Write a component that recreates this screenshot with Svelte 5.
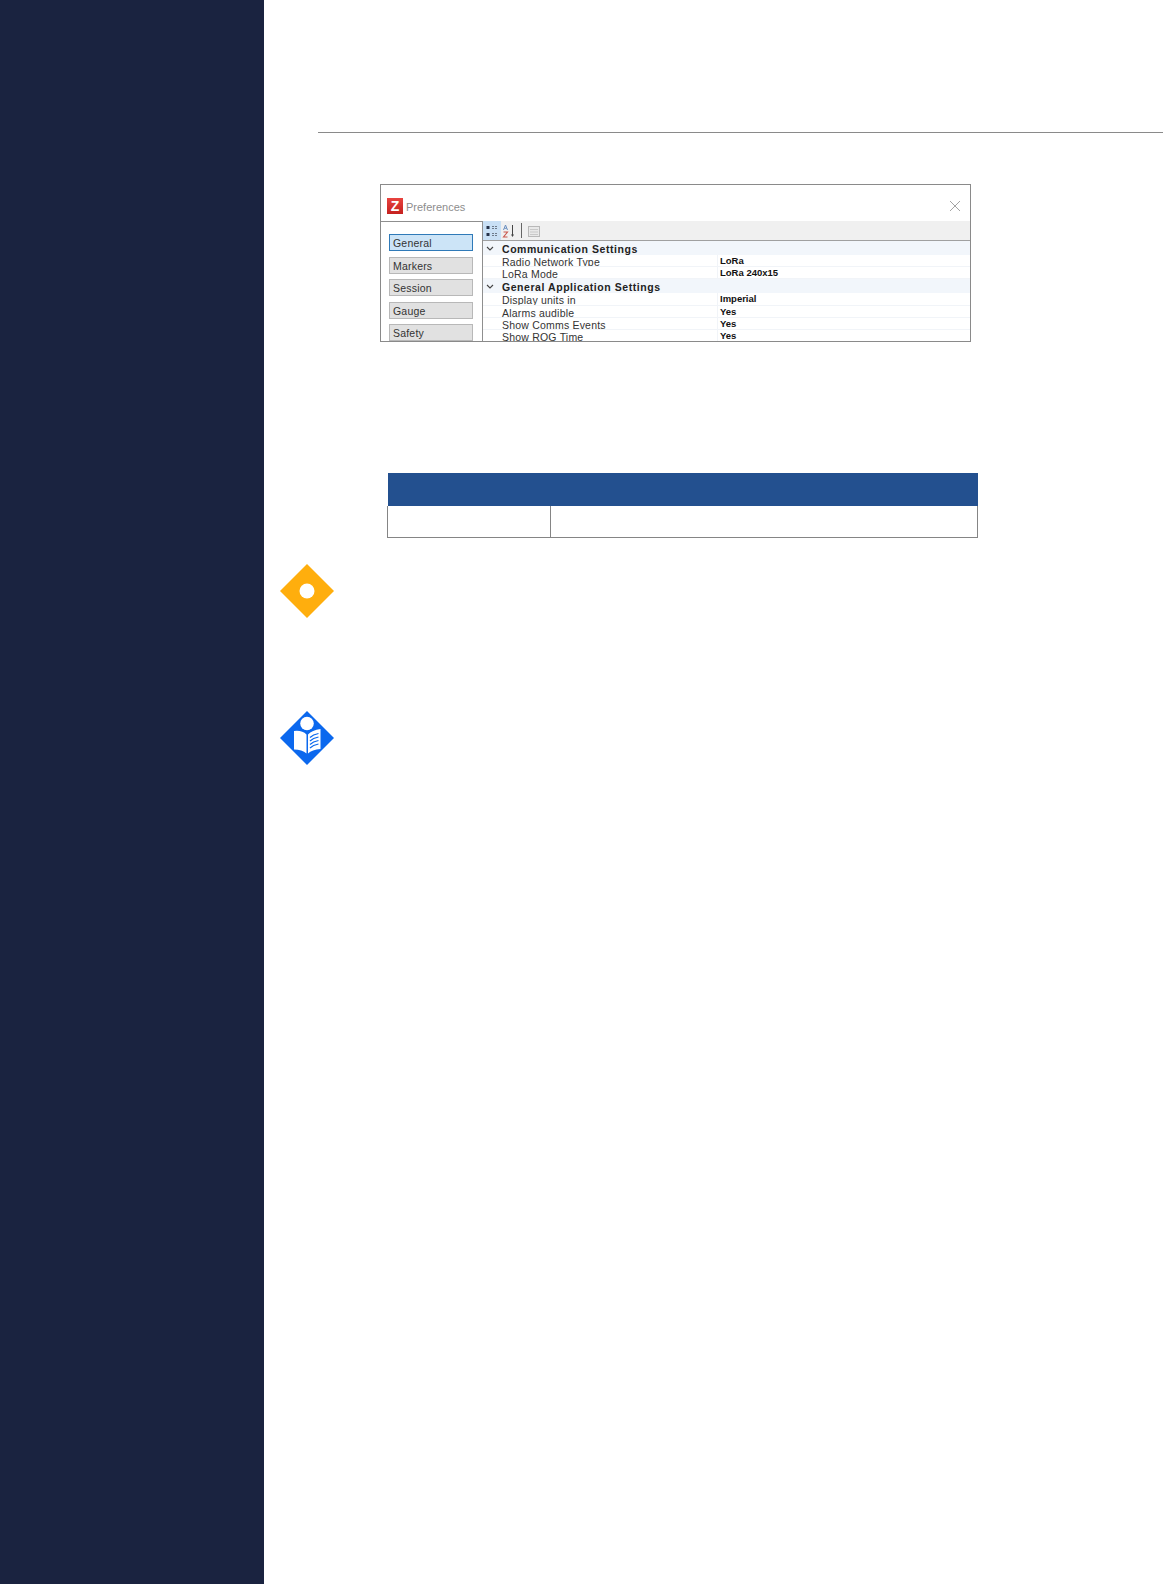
<script lang="ts">
	const tabs = ['General', 'Markers', 'Session', 'Gauge', 'Safety'];
	// property grid rows, group headers have no value
	const rows = [
		{ group: 'Communication Settings' },
		{ name: 'Radio Network Type', value: 'LoRa' },
		{ name: 'LoRa Mode', value: 'LoRa 240x15' },
		{ group: 'General Application Settings' },
		{ name: 'Display units in', value: 'Imperial' },
		{ name: 'Alarms audible', value: 'Yes' },
		{ name: 'Show Comms Events', value: 'Yes' },
		{ name: 'Show ROG Time', value: 'Yes' }
	];
</script>

<div class="page">
	<aside class="side"></aside>

	<main class="main">
		<div class="rule"></div>

		<section class="dialog">
			<header class="title">
				<span class="logo">Z</span>
				<span class="caption">Preferences</span>
				<svg class="close" viewBox="0 0 12 12" width="12" height="12" aria-hidden="true">
					<path d="M1 1l10 10M11 1L1 11" stroke="#9a9a9a" stroke-width="0.9" fill="none" />
				</svg>
			</header>
			<div class="body">
				<nav class="tabs">
					{#each tabs as tab, i}
						<div class="tab" class:active={i === 0}>{tab}</div>
					{/each}
				</nav>
				<div class="panel">
					<div class="toolbar">
						<span class="tool on">
							<svg viewBox="0 0 16 16" width="16" height="16" aria-hidden="true">
								<path d="M2.500 3h3v3h-3zM2.500 10h3v3h-3z" fill="#26324a" />
								<path d="M8 3.500h6M8 5.500h5M8 10.500h6M8 12.500h5" stroke="#6d7a8a" stroke-width="1" stroke-dasharray="2 1" />
							</svg>
						</span>
						<span class="tool">
							<svg viewBox="0 0 16 16" width="16" height="16" aria-hidden="true">
								<path d="M1.500 7l2-5 2 5M2.400 5.300h2.200" stroke="#6a8fc0" stroke-width="1" fill="none" />
								<path d="M1.500 9h4l-4 5h4" stroke="#c8574c" stroke-width="1.100" fill="none" />
								<path d="M10.500 2v10" stroke="#444" stroke-width="1" />
								<path d="M9 11.500h3l-1.500 2.500z" fill="#444" />
							</svg>
						</span>
						<span class="sep"></span>
						<span class="tool">
							<svg viewBox="0 0 16 16" width="16" height="16" aria-hidden="true">
								<rect x="2.500" y="3.500" width="11" height="10" fill="#e8e8e8" stroke="#b8b8b8" />
								<path d="M4 6.500h8M4 9h8M4 11.500h8" stroke="#c8c8c8" />
							</svg>
						</span>
					</div>
					<div class="grid">
						{#each rows as row}
							{#if row.group}
								<div class="group">
									<svg class="chev" viewBox="0 0 8 5" width="8" height="5" aria-hidden="true">
										<path d="M1 1l3 3 3-3" stroke="#444" stroke-width="1.100" fill="none" />
									</svg>
									<span>{row.group}</span>
								</div>
							{:else}
								<div class="row">
									<span class="name">{row.name}</span>
									<span class="value">{row.value}</span>
								</div>
							{/if}
						{/each}
					</div>
				</div>
			</div>
		</section>

		<table class="table">
			<colgroup>
				<col class="first" />
				<col />
			</colgroup>
			<thead>
				<tr><th colspan="2"></th></tr>
			</thead>
			<tbody>
				<tr><td></td><td></td></tr>
			</tbody>
		</table>

		<div class="icon warn">
			<svg viewBox="0 0 56 56" width="56" height="56" aria-hidden="true">
				<path d="M28 1l27 27-27 27L1 28z" fill="#ffae0d" />
				<circle cx="28" cy="28" r="7.500" fill="#fff" />
			</svg>
		</div>

		<div class="icon manual">
			<svg viewBox="0 0 56 56" width="56" height="56" aria-hidden="true">
				<path d="M28 1l27 27-27 27L1 28z" fill="#0b68ee" />
				<circle cx="28" cy="13.500" r="6.800" fill="#fff" />
				<path d="M15 21q8-1 12.500 3.500v19q-4.500-4-12.500-4z" fill="#fff" />
				<path d="M29 24.500q4-4.500 12.500-5.500v20q-8.500.5-12.500 4.500z" fill="#fff" />
				<path d="M31 27.500q3-3 8.500-4M31 31q3-3 8.500-4M31 34.500q3-3 8.500-4M31 38q3-3 8.500-4" stroke="#0b68ee" stroke-width="1.200" fill="none" />
			</svg>
		</div>
	</main>
</div>

<style>
	:global(body) {
		background: #fff;
		font-family: 'Liberation Sans', Arial, sans-serif;
	}

	.page {
		display: flex;
		height: 1584px;
		overflow: hidden;
	}

	.side {
		flex: none;
		width: 264px;
		background: #1a2340;
	}

	.main {
		flex: 1;
		padding-top: 132px;
	}

	.rule {
		height: 1px;
		margin-left: 54px;
		background: #8a8a8a;
	}

	.dialog {
		width: 591px;
		height: 158px;
		margin: 51px 0 0 116px;
		box-sizing: border-box;
		border: 1px solid #8a8a8a;
		background: #fff;
		display: flex;
		flex-direction: column;
		overflow: hidden;
	}

	.title {
		flex: none;
		height: 36px;
		display: flex;
		align-items: center;
		gap: 3px;
		padding: 6px 9px 0 6px;
		box-sizing: border-box;
	}

	.logo {
		width: 16px;
		height: 16px;
		background: linear-gradient(#e8433f, #c5211f);
		color: #fff;
		font-weight: 700;
		font-size: 14px;
		line-height: 16px;
		text-align: center;
	}

	.caption {
		font-size: 11px;
		line-height: 14px;
		padding-top: 1px;
		color: #8d8d8d;
	}

	.close {
		margin-left: auto;
	}

	.body {
		flex: 1;
		display: flex;
		min-height: 0;
	}

	.tabs {
		flex: none;
		width: 102px;
		box-sizing: border-box;
		border-top: 1px solid #8f8f8f;
		border-right: 1px solid #8f8f8f;
		padding: 12px 9px 0 8px;
		display: flex;
		flex-direction: column;
		gap: 5.500px;
	}

	.tab {
		flex: none;
		height: 17px;
		box-sizing: border-box;
		border: 1px solid #b8b8b8;
		background: #e1e1e1;
		padding-left: 3px;
		font-size: 10.500px;
		line-height: 16px;
		color: #333;
		letter-spacing: 0.2px;
		overflow: hidden;
	}

	.tab.active {
		background: #cce4f7;
		border-color: #2f7ab8;
	}

	.panel {
		flex: 1;
		min-width: 0;
		display: flex;
		flex-direction: column;
	}

	.toolbar {
		flex: none;
		height: 20px;
		box-sizing: border-box;
		background: #f0f0f0;
		border-bottom: 1px solid #a0a0a0;
		display: flex;
		align-items: center;
	}

	.tool {
		width: 18px;
		height: 19px;
		display: flex;
		align-items: center;
		justify-content: center;
	}

	.tool.on {
		background: #c9e0f5;
	}

	.sep {
		width: 1px;
		height: 15px;
		margin: 0 3px 0 2px;
		background: #666;
	}

	.grid {
		flex: 1;
		min-height: 0;
		overflow: hidden;
		font-size: 10.500px;
	}

	.group {
		height: 14px;
		background: #f2f6fb;
		display: flex;
		align-items: flex-start;
		line-height: 17px;
		font-weight: 700;
		color: #222;
		letter-spacing: 0.55px;
		overflow: hidden;
	}

	.chev {
		flex: none;
		margin: 5px 8px 0 3px;
	}

	.row {
		height: 12.200px;
		box-sizing: border-box;
		border-bottom: 1px solid #f1f4f8;
		display: grid;
		grid-template-columns: 216px 1fr;
		padding-left: 19px;
		line-height: 15px;
		color: #333;
		letter-spacing: 0.2px;
		overflow: hidden;
	}

	.name {
		border-right: 1px solid #f1f4f8;
	}

	.value {
		padding-left: 2px;
		font-size: 9.500px;
		font-weight: 700;
		color: #111;
		letter-spacing: 0;
		line-height: 12px;
	}

	.table {
		width: 591px;
		margin: 131px 0 0 123px;
		border-collapse: collapse;
		table-layout: fixed;
	}

	col.first {
		width: 163px;
	}

	.table th {
		height: 33px;
		padding: 0;
		background: #23508f;
	}

	.table td {
		height: 31px;
		padding: 0;
		border: 1px solid #858585;
		border-top: 0;
	}

	.icon {
		width: 56px;
		height: 56px;
		margin-left: 15px;
	}

	.icon svg {
		display: block;
	}

	.warn {
		margin-top: 25px;
	}

	.manual {
		margin-top: 91px;
	}
</style>
